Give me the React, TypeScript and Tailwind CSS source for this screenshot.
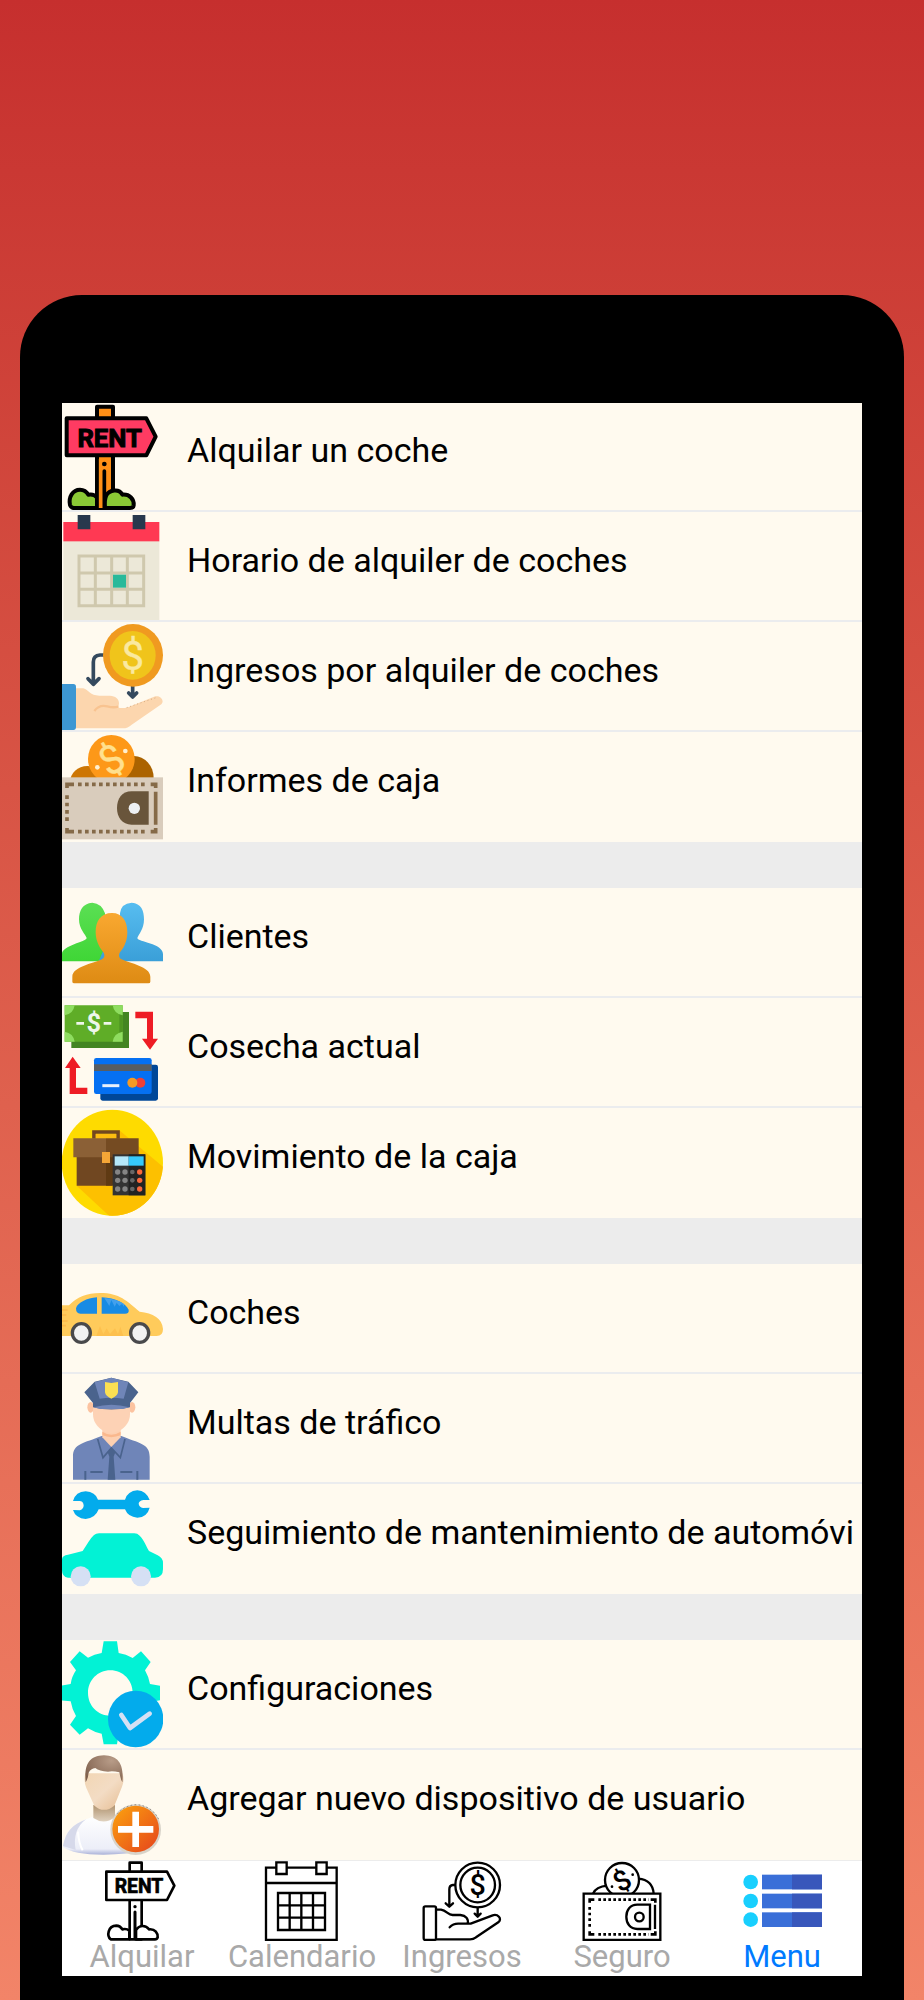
import React, { useState } from 'react';

interface IconProps {
  className?: string;
}

interface MenuItem {
  id: string;
  label: string;
  icon: React.FC<IconProps>;
}

const SANS = 'Roboto, sans-serif';

/* ---------- Menu icons ---------- */

const RentSignIcon: React.FC<IconProps> = ({ className }) => (
  <svg className={className} viewBox="36 21 303 324" aria-hidden="true">
    <g stroke="#000" strokeWidth="12" strokeLinejoin="round">
      <rect x="141" y="35" width="48" height="304" fill="#ff8f16" />
      <path d="M60 330c-5-24 8-46 30-46 12 0 20 6 25 15 10-2 20 1 26 8v32H70q-8-2-10-9z" fill="#8ac935" />
      <path d="M165 339c-2-20-1-28 4-38 9-16 38-22 48-2 22-2 36 14 34 32-1 6-5 8-11 8z" fill="#8ac935" />
      <path d="M50 70H289L317 125L289 181H50Z" fill="#ff3b62" />
    </g>
    <path d="M142 192h20v147h-20z" fill="#ff8f16" />
    <path d="M163 228V338M141 188V338" stroke="#000" strokeWidth="11" strokeLinecap="round" />
    <circle cx="163" cy="207" r="7" />
    <text x="179" y="155" textAnchor="middle" fontFamily={SANS} fontWeight="700" fontSize="77" stroke="#000" strokeWidth="3">RENT</text>
  </svg>
);

const CalendarIcon: React.FC<IconProps> = ({ className }) => (
  <svg className={className} viewBox="36 351 303 324" aria-hidden="true">
    <rect x="40" y="438" width="288" height="237" fill="#ece8d8" />
    <rect x="40" y="381" width="288" height="58" fill="#ff3953" />
    <path d="M83 360h38v43H83zM248 360h38v43h-38z" fill="#28384d" />
    <path d="M87 483H281V632H87ZM136 483V632M185 483V632M232 483V632M87 534H281M87 583H281" fill="none" stroke="#cfc8ad" strokeWidth="9" />
    <rect x="189" y="539" width="39" height="39" fill="#29b99a" />
  </svg>
);

const IncomeIcon: React.FC<IconProps> = ({ className }) => (
  <svg className={className} viewBox="36 6 303 324" aria-hidden="true">
    <path d="M76 205H100C116 210 120 227 148 227H180C196 228 207 236 207 250L205 263C222 266 232 263 245 257L316 229C333 225 344 243 334 253L245 314Q234 325 218 325H76Z" fill="#fcd6ae" />
    <path d="M133 273Q147 253 172 259Q190 264 205 260" fill="none" stroke="#f8c390" strokeWidth="7" />
    <path d="M230 263L318 233" stroke="#d6ac83" strokeWidth="3" strokeDasharray="3 8" />
    <path d="M36 192H70Q78 192 78 200V321Q78 330 70 330H36Z" fill="#3d97d3" />
    <g fill="none" stroke="#34495e" strokeWidth="11" strokeLinecap="round" strokeLinejoin="round">
      <path d="M160 105H150Q130 106 130 126V190M114 176L130 193L147 176" />
      <path d="M248 195V228M236 219L248 231L260 219" />
    </g>
    <ellipse cx="249" cy="106" rx="90" ry="94" fill="#f09a20" />
    <ellipse cx="248" cy="106" rx="69" ry="73" fill="#f0c41b" />
    <text x="248" y="150" textAnchor="middle" fontFamily={SANS} fontSize="122" fill="#fae9a0" stroke="#fae9a0" strokeWidth="1">$</text>
  </svg>
);

const WalletIcon: React.FC<IconProps> = ({ className }) => (
  <svg className={className} viewBox="36 336 303 324" aria-hidden="true">
    <ellipse cx="112" cy="486" rx="52" ry="48" fill="#cd7604" />
    <ellipse cx="252" cy="474" rx="59" ry="66" fill="#ab6300" />
    <ellipse cx="184" cy="417" rx="70" ry="72" fill="#fd9818" />
    <text x="184" y="461" textAnchor="middle" fontFamily={SANS} fontSize="120" fill="#ffe08e" stroke="#ffe08e" strokeWidth="1" transform="rotate(-30 184 418)">$</text>
    <circle cx="226" cy="393" r="7" fill="#fff0d0" />
    <circle cx="142" cy="442" r="7" fill="#fff0d0" />
    <rect x="36" y="472" width="303" height="186" fill="#d9ccbc" />
    <g fill="none" stroke="#856a48" strokeWidth="11">
      <path d="M84 493H290M84 635H290" strokeDasharray="11 10" />
      <path d="M51 526V606" strokeDasharray="11 11" />
      <path d="M51 504V493H72M302 493H317V504M51 624V635H72M302 635H317V624M317 515V614" />
    </g>
    <path d="M296 514V614H245C216 614 201 592 201 564S216 514 245 514Z" fill="#69553b" />
    <circle cx="253" cy="565" r="17" fill="#edf0f2" />
  </svg>
);

const ClientsIcon: React.FC<IconProps> = ({ className }) => (
  <svg className={className} viewBox="36 24 303 324" aria-hidden="true">
    <defs>
      <linearGradient id="clientGreen" x1="0" y1="0" x2="0" y2="1">
        <stop stopColor="#5bdf54" />
        <stop offset="1" stopColor="#3fd636" />
      </linearGradient>
      <linearGradient id="clientBlue" x1="0" y1="0" x2="0" y2="1">
        <stop stopColor="#57bdf0" />
        <stop offset="1" stopColor="#3a9fd8" />
      </linearGradient>
      <linearGradient id="clientOrange" x1="0" y1="0" x2="0" y2="1">
        <stop stopColor="#f9a830" />
        <stop offset="1" stopColor="#de8b14" />
      </linearGradient>
    </defs>
    <path d="M245 68C274 70 282 92 282 118C282 148 266 162 262 174C263 186 339 190 339 222V244H146V222Q150 213 170 210L210 190V100Q213 70 245 68Z" fill="url(#clientBlue)" />
    <path d="M127 68C98 70 87 92 87 118C87 148 106 162 110 174C109 186 36 196 36 222V244H146L165 200V100Q155 70 127 68Z" fill="url(#clientGreen)" />
    <path d="M186 99C152 99 137 123 137 157C137 187 152 207 161 218C165 226 164 232 156 238C132 250 67 260 67 290V305Q67 310 73 310H295Q301 310 301 305V290C301 260 239 250 215 238C206 232 206 226 209 218C219 207 232 187 232 157C232 123 217 99 186 99Z" fill="url(#clientOrange)" />
  </svg>
);

const ExchangeIcon: React.FC<IconProps> = ({ className }) => (
  <svg className={className} viewBox="36 354 303 324" aria-hidden="true">
    <path d="M64 396H237V504H64Z" fill="#438522" />
    <path d="M44 376H218V485H44Z" fill="#5fad27" />
    <path d="M208 400V485H218V396Z" fill="#4e9522" />
    <path d="M44 376H74Q70 402 44 406ZM218 376H188Q192 402 218 406ZM44 485H74Q70 459 44 455ZM218 485H188Q192 459 218 455Z" fill="#8fdd60" />
    <path d="M79 430H102M161 430H184" stroke="#eef6ea" strokeWidth="8" />
    <text x="131" y="457" textAnchor="middle" fontFamily={SANS} fontWeight="700" fontSize="76" fill="#eef6ea">$</text>
    <path d="M256 395H309V476H324L300 509L276 476H291V415H256Z" fill="#ee1c25" />
    <path d="M112 642H59V564H45L68 530L92 564H78V623H112Z" fill="#ee1c25" />
    <rect x="151" y="554" width="173" height="108" rx="7" fill="#004798" />
    <rect x="132" y="534" width="173" height="108" rx="7" fill="#0570f2" />
    <path d="M132 553H305V573H132Z" fill="#575d62" />
    <path d="M157 617H208" stroke="#e9f0fa" strokeWidth="9" />
    <circle cx="271" cy="608" r="15" fill="#ee4036" />
    <circle cx="247" cy="608" r="15" fill="#f59a23" />
  </svg>
);

const CashIcon: React.FC<IconProps> = ({ className }) => (
  <svg className={className} viewBox="36 684 303 324" aria-hidden="true">
    <clipPath id="cashDisc">
      <ellipse cx="187" cy="848" rx="152" ry="159" />
    </clipPath>
    <g clipPath="url(#cashDisc)">
      <rect x="34" y="688" width="306" height="320" fill="#fedb00" />
      <path d="M208 751L345 865V1010H180L80 917Z" fill="#fdc000" />
    </g>
    <path d="M132 776V756H204V776" fill="none" stroke="#734820" strokeWidth="11" />
    <path d="M137 762H199V776H137Z" fill="#fdbd10" />
    <path d="M80 830H187V917H80Z" fill="#704721" />
    <path d="M168 830H255V917H168Z" fill="#5f3a13" />
    <path d="M70 775H168V832H70Z" fill="#8b6036" />
    <path d="M168 775H266V832H168Z" fill="#754b22" />
    <path d="M156 816H180V849H156Z" fill="#f5a637" />
    <rect x="188" y="823" width="98" height="123" fill="#333" />
    <rect x="236" y="823" width="50" height="123" fill="#222" />
    <path d="M194 829H236V857H194Z" fill="#b5e8fa" />
    <path d="M236 829H281V857H236Z" fill="#36c8fa" />
    {[876, 901, 927].map(y => (
      <g key={y} fill="#858585">
        <circle cx="203" cy={y} r="8" />
        <circle cx="225" cy={y} r="8" />
        <circle cx="247" cy={y} r="7" fill="#666" />
        <circle cx="269" cy={y} r="8" fill="#f9683c" />
      </g>
    ))}
  </svg>
);

const CarIcon: React.FC<IconProps> = ({ className }) => (
  <svg className={className} viewBox="36 27 303 324" aria-hidden="true">
    <path d="M36 151H57Q92 114 150 114C210 114 230 138 269 170C309 174 337 190 339 222Q339 243 320 243H36Z" fill="#ffcb5b" />
    <path d="M36 165H53M36 180H49M36 198H53M36 212H48" stroke="#fdb94a" strokeWidth="5" />
    <path d="M139 243L150 213L160 237L170 220L180 237L195 220L204 237L211 215L220 243Z" fill="#fdc04e" />
    <path d="M141 127V176H91Q78 176 78 160C83 142 110 130 141 127ZM155 127C198 129 226 144 236 164Q238 176 225 176H155Z" fill="#188be4" />
    <path d="M163 129L178 153L184 135L194 155L200 143L208 153L216 147L222 155V147Q200 132 163 129Z" fill="#42a0ed" />
    <g fill="#f2f2f2" stroke="#49494b" strokeWidth="10">
      <ellipse cx="94" cy="234" rx="27" ry="28" />
      <ellipse cx="269" cy="234" rx="27" ry="28" />
    </g>
  </svg>
);

const PoliceIcon: React.FC<IconProps> = ({ className }) => (
  <svg className={className} viewBox="36 357 303 324" aria-hidden="true">
    <path d="M69 674V605C69 565 100 565 157 542H212C268 565 299 565 299 605V674Z" fill="#6f85b8" />
    <path d="M157 525H212V547L184 576L157 547Z" fill="#fdd0b1" />
    <path d="M157 530Q184 548 212 530V541Q184 552 157 541Z" fill="#fab88d" />
    <ellipse cx="122" cy="457" rx="10" ry="16" fill="#fcc3a0" />
    <ellipse cx="246" cy="457" rx="10" ry="16" fill="#fcc3a0" />
    <path d="M129 440H240V478C240 510 210 534 184 534S129 510 129 478Z" fill="#fdd2b5" />
    <path d="M103 412L134 380L184 368L235 380L265 412L240 444V457Q184 470 129 457V444Z" fill="#4a638d" />
    <path d="M134 382L184 368L235 382L221 431Q184 425 149 431Z" fill="#6f85b8" />
    <path d="M131 457Q184 441 238 457L218 462H150Z" fill="#6f85b8" />
    <path d="M165 381L184 384L204 381V412Q202 424 184 431Q167 424 165 412Z" fill="#fce052" />
    <path d="M143 552L159 608L184 579L211 608L225 552" fill="none" stroke="#4a638d" strokeWidth="5" />
    <path d="M184 576L196 592L191 605L196 674H173L178 605L173 592Z" fill="#4a638d" />
    <path d="M106 648V674M262 648V674M121 651H158M211 651H247" stroke="#4a638d" strokeWidth="6" />
  </svg>
);

const MaintenanceIcon: React.FC<IconProps> = ({ className }) => (
  <svg className={className} viewBox="36 687 303 324" aria-hidden="true">
    <path d="M69 738Q77 710 107 709Q136 711 144 734H225Q233 708 262 706Q289 708 299 735H280Q266 738 266 746Q267 756 279 759L299 758Q292 786 262 788Q234 786 225 763H146Q136 790 107 792Q77 790 69 765L90 766Q101 762 101 751Q100 738 88 738Z" fill="#03abec" />
    <path d="M36 912Q37 901 54 899L98 888C110 871 121 850 132 840Q138 835 147 835H253Q262 835 269 842C283 856 289 874 297 888L323 901Q339 909 339 924V942Q339 968 315 968H54Q36 966 36 945Z" fill="#02f2d5" />
    <circle cx="92" cy="964" r="30" fill="#d5e0f4" />
    <circle cx="273" cy="964" r="30" fill="#d5e0f4" />
  </svg>
);

const SettingsIcon: React.FC<IconProps> = ({ className }) => (
  <svg className={className} viewBox="36 30 303 324" aria-hidden="true">
    <path fillRule="evenodd" d="M161 34H201L206 69Q228 72 248 84L273 64L302 96L285 121Q296 140 300 162L330 167V211L300 216Q296 238 284 258L302 284L273 314L248 295Q228 307 206 311L201 343H161L155 311Q133 307 114 295L89 314L60 284L78 258Q66 238 62 214L33 211V167L62 162Q65 140 78 121L60 96L89 64L114 83Q133 72 155 69ZM181 121C143 121 114 151 114 189S143 257 181 257S248 227 248 189S219 121 181 121Z" fill="#02f2d5" />
    <ellipse cx="257" cy="267" rx="83" ry="85" fill="#03abec" />
    <path d="M214 255L240 294L299 251" fill="none" stroke="#d5e0f4" strokeWidth="14" strokeLinecap="round" strokeLinejoin="round" />
  </svg>
);

const AddUserIcon: React.FC<IconProps> = ({ className }) => (
  <svg className={className} viewBox="36 360 303 324" aria-hidden="true">
    <defs>
      <radialGradient id="addUserHair" cx=".7" cy=".2" r=".9">
        <stop stopColor="#b89c88" />
        <stop offset="1" stopColor="#7d5e4b" />
      </radialGradient>
      <linearGradient id="addUserFace" x1="0" y1="0" x2="1" y2="1">
        <stop stopColor="#f2d6b4" />
        <stop offset=".5" stopColor="#f3dcc4" />
        <stop offset="1" stopColor="#e6bd92" />
      </linearGradient>
      <linearGradient id="addUserNeck" x1="0" y1="0" x2="0" y2="1">
        <stop stopColor="#b0936f" />
        <stop offset="1" stopColor="#e0d2c0" />
      </linearGradient>
      <linearGradient id="addUserShirt" x1="0" y1="0" x2="0" y2="1">
        <stop stopColor="#fff" />
        <stop offset=".85" stopColor="#eceef8" />
        <stop offset="1" stopColor="#a9b1d8" />
      </linearGradient>
      <linearGradient id="addUserBadge" x1="0" y1="0" x2="1" y2="1">
        <stop stopColor="#fca40e" />
        <stop offset="1" stopColor="#e5431d" />
      </linearGradient>
    </defs>
    <path d="M39 651C46 604 64 583 128 560H196C250 580 285 620 290 660Q230 674 160 674Q70 674 39 651Z" fill="url(#addUserShirt)" />
    <path d="M39 648C48 604 66 585 108 568Q66 600 77 660Z" fill="#d6d9ea" />
    <path d="M84 605Q86 640 98 661" fill="none" stroke="#fff" strokeWidth="6" />
    <path d="M130 525H195V562Q162 586 130 564Z" fill="url(#addUserNeck)" />
    <path d="M106 430H218Q224 455 216 470Q203 503 193 527Q162 552 133 527Q122 503 109 474Q100 452 106 430Z" fill="url(#addUserFace)" />
    <path d="M107 457C103 410 112 377 162 376C210 377 222 410 217 457Q211 446 208 427Q187 421 174 425Q148 424 136 414Q122 416 116 428Q114 446 107 457Z" fill="url(#addUserHair)" />
    <circle cx="257" cy="599" r="76" fill="#d8d3c9" />
    <path d="M202 552Q226 524 262 524Q310 530 328 572" fill="none" stroke="#625a55" strokeWidth="2" strokeDasharray="5 7" />
    <circle cx="257" cy="597" r="70" fill="url(#addUserBadge)" />
    <path d="M257 545V651M204 598H310" stroke="#fff" strokeWidth="20" />
  </svg>
);

/* ---------- Tab bar icons ---------- */

const RentTabIcon: React.FC<IconProps> = ({ className }) => (
  <svg className={className} viewBox="156 33 240 240" aria-hidden="true">
    <g fill="#fff" stroke="#000" strokeWidth="8" strokeLinejoin="round">
      <path d="M239 38H275V268H239Z" />
      <path d="M182 268C170 258 173 228 199 227Q210 227 217 238Q230 235 238 242V268Z" />
      <path d="M258 268V240Q266 228 278 228Q290 228 297 238C316 236 324 250 323 262Q321 268 315 268Z" />
      <path d="M169 65H351L373 107L351 150H169Z" />
    </g>
    <path d="M255 186V266" stroke="#000" strokeWidth="9" strokeLinecap="round" />
    <circle cx="255" cy="170" r="5" />
    <text x="267" y="129" textAnchor="middle" fontFamily={SANS} fontWeight="700" fontSize="58" stroke="#000" strokeWidth="2">RENT</text>
  </svg>
);

const CalendarTabIcon: React.FC<IconProps> = ({ className }) => (
  <svg className={className} viewBox="636 33 240 240" aria-hidden="true">
    <g fill="#fff" stroke="#000" strokeWidth="7">
      <path d="M648 53H860V270H648ZM648 99H860" />
      <path d="M679 37H710V72H679ZM799 37H830V72H799Z" />
      <path d="M684 129H825V240H684ZM719 129V240M754 129V240M789 129V240M684 166H825M684 203H825" />
    </g>
  </svg>
);

const IncomeTabIcon: React.FC<IconProps> = ({ className }) => (
  <svg className={className} viewBox="126 33 240 240" aria-hidden="true">
    <g fill="none" stroke="#000" strokeWidth="7" strokeLinecap="round" strokeLinejoin="round">
      <rect x="131" y="169" width="37" height="101" rx="5" />
      <path d="M169 179H183C201 182 203 195 218 195H241C258 197 266 206 263 220M209 232Q220 220 237 221H272L338 196C353 191 367 206 356 216L288 262Q280 268 270 268H169" />
      <circle cx="293" cy="105" r="67" />
      <circle cx="293" cy="105" r="52" />
      <path d="M225 105H219Q208 106 208 118V168M197 160L208 170L219 160M293 174V198M284 191L293 200L302 191" />
    </g>
    <text x="293" y="136" textAnchor="middle" fontFamily={SANS} fontWeight="500" fontSize="86">$</text>
  </svg>
);

const WalletTabIcon: React.FC<IconProps> = ({ className }) => (
  <svg className={className} viewBox="608 33 240 240" aria-hidden="true">
    <g fill="#fff" stroke="#000" strokeWidth="7">
      <path d="M641 131Q650 110 684 107M777 86Q820 90 823 131" />
      <circle cx="728" cy="90" r="51" />
      <path d="M613 131H843V270H613Z" />
      <path d="M812 164V237H774C752 237 741 220 741 200S752 164 774 164ZM827 164V237" />
      <circle cx="780" cy="201" r="13" />
    </g>
    <g fill="none" stroke="#000" strokeWidth="8">
      <path d="M657 149H808M657 253H808" strokeDasharray="8 7" />
      <path d="M631 171V232" strokeDasharray="8 9" />
      <path d="M631 158V149H645M814 149H828V158M631 244V253H645M814 253H828V244" />
    </g>
    <circle cx="760" cy="74" r="4" />
    <circle cx="698" cy="110" r="4" />
    <text x="728" y="121" textAnchor="middle" fontFamily={SANS} fontWeight="500" fontSize="84" transform="rotate(-30 728 91)">$</text>
  </svg>
);

const MenuTabIcon: React.FC<IconProps> = ({ className }) => (
  <svg className={className} viewBox="549 35 240 240" aria-hidden="true">
    {[98, 155, 211].map(y => (
      <g key={y}>
        <circle cx="575" cy={y} r="22" fill="#18cffe" />
        <rect x="609" y={y - 22} width="180" height="44" fill="#3a6fd8" />
        <rect x="699" y={y - 22} width="90" height="44" fill="#3857bb" />
      </g>
    ))}
  </svg>
);

const menuGroups: MenuItem[][] = [
  [
    { id: 'rent', label: 'Alquilar un coche', icon: RentSignIcon },
    { id: 'schedule', label: 'Horario de alquiler de coches', icon: CalendarIcon },
    { id: 'income', label: 'Ingresos por alquiler de coches', icon: IncomeIcon },
    { id: 'reports', label: 'Informes de caja', icon: WalletIcon },
  ],
  [
    { id: 'clients', label: 'Clientes', icon: ClientsIcon },
    { id: 'crop', label: 'Cosecha actual', icon: ExchangeIcon },
    { id: 'cash', label: 'Movimiento de la caja', icon: CashIcon },
  ],
  [
    { id: 'cars', label: 'Coches', icon: CarIcon },
    { id: 'fines', label: 'Multas de tráfico', icon: PoliceIcon },
    { id: 'maintenance', label: 'Seguimiento de mantenimiento de automóvi', icon: MaintenanceIcon },
  ],
  [
    { id: 'settings', label: 'Configuraciones', icon: SettingsIcon },
    { id: 'add-user', label: 'Agregar nuevo dispositivo de usuario', icon: AddUserIcon },
  ],
];

const tabs: MenuItem[] = [
  { id: 'rent', label: 'Alquilar', icon: RentTabIcon },
  { id: 'calendar', label: 'Calendario', icon: CalendarTabIcon },
  { id: 'income', label: 'Ingresos', icon: IncomeTabIcon },
  { id: 'insurance', label: 'Seguro', icon: WalletTabIcon },
  { id: 'menu', label: 'Menu', icon: MenuTabIcon },
];

const App: React.FC = () => {
  const [activeTab, setActiveTab] = useState('menu');

  return (
    <div className="min-h-screen bg-linear-to-b from-[#c62f2e] to-[#f28468] px-5 pt-[295px] font-[Roboto,sans-serif]">
      <div className="rounded-t-[62px] bg-black px-[42px] pt-[108px] pb-6">
        <div className="overflow-hidden bg-white">
          {/* Menu list, grouped by grey separators */}
          <main className="-mt-px flex flex-col gap-[46px] bg-[#ececec]">
            {menuGroups.map((group, index) => (
              <ul key={index} className="divide-y-2 divide-[#ebecee] bg-[#fffaef]">
                {group.map(({ id, label, icon: Icon }) => (
                  <li key={id} className="h-[110px]">
                    <a href={`#${id}`} className="flex h-full items-start gap-6">
                      <Icon className="h-[108px] w-[101px] shrink-0" />
                      <span className="overflow-hidden pt-7 text-[34px] leading-10 whitespace-nowrap text-black">{label}</span>
                    </a>
                  </li>
                ))}
              </ul>
            ))}
          </main>

          {/* Bottom tab bar */}
          <nav className="grid h-[116px] grid-cols-5 border-t border-[#ececec] bg-white">
            {tabs.map(({ id, label, icon: Icon }) => (
              <button
                key={id}
                type="button"
                onClick={() => setActiveTab(id)}
                className={`flex flex-col items-center text-[31px] leading-8 ${activeTab === id ? 'text-[#007aff]' : 'text-[#a9a9a9]'}`}
              >
                <Icon className="size-20 shrink-0" />
                {label}
              </button>
            ))}
          </nav>
        </div>
      </div>
    </div>
  );
};

export default App;
